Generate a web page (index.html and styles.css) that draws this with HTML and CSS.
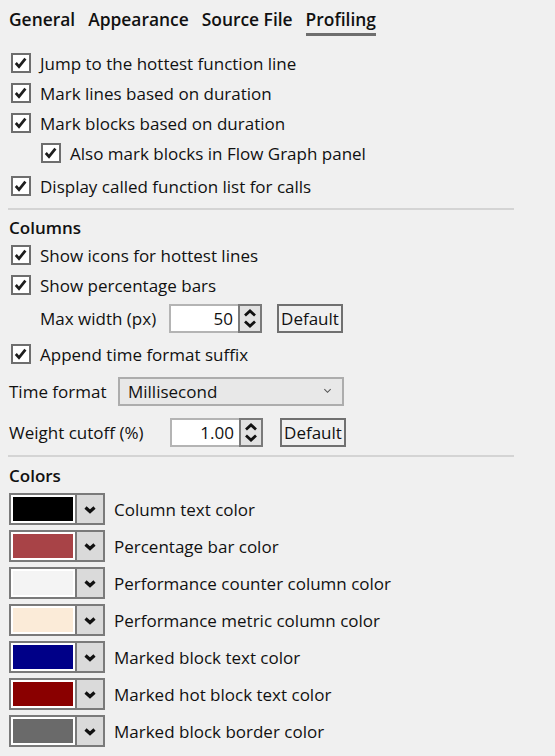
FILE: index.html
```html
<!DOCTYPE html>
<html>
<head>
<meta charset="utf-8">
<link rel="stylesheet" href="styles.css">
</head>
<body>
<div class="tabs">
  <div class="tab">General</div>
  <div class="tab">Appearance</div>
  <div class="tab">Source File</div>
  <div class="tab active">Profiling</div>
</div>

<div class="group first">
  <label class="cb"><span class="box"><svg viewBox="0 0 20 20"><polyline points="3.5,10 7.5,14.5 15.5,4.5"/></svg></span>Jump to the hottest function line</label>
  <label class="cb"><span class="box"><svg viewBox="0 0 20 20"><polyline points="3.5,10 7.5,14.5 15.5,4.5"/></svg></span>Mark lines based on duration</label>
  <label class="cb"><span class="box"><svg viewBox="0 0 20 20"><polyline points="3.5,10 7.5,14.5 15.5,4.5"/></svg></span>Mark blocks based on duration</label>
  <label class="cb sub"><span class="box"><svg viewBox="0 0 20 20"><polyline points="3.5,10 7.5,14.5 15.5,4.5"/></svg></span>Also mark blocks in Flow Graph panel</label>
  <label class="cb gap"><span class="box"><svg viewBox="0 0 20 20"><polyline points="3.5,10 7.5,14.5 15.5,4.5"/></svg></span>Display called function list for calls</label>
</div>

<div class="sep"></div>

<div class="group">
  <div class="head">Columns</div>
  <label class="cb"><span class="box"><svg viewBox="0 0 20 20"><polyline points="3.5,10 7.5,14.5 15.5,4.5"/></svg></span>Show icons for hottest lines</label>
  <label class="cb"><span class="box"><svg viewBox="0 0 20 20"><polyline points="3.5,10 7.5,14.5 15.5,4.5"/></svg></span>Show percentage bars</label>
  <div class="field sub2">
    <span class="flabel w1">Max width (px)</span>
    <div class="spin"><span class="val">50</span><span class="arrows"><svg viewBox="0 0 20 24"><polyline points="5,9 10,4.5 15,9"/><polyline points="5,15 10,19.5 15,15"/></svg></span></div>
    <button class="btn">Default</button>
  </div>
  <label class="cb gap2"><span class="box"><svg viewBox="0 0 20 20"><polyline points="3.5,10 7.5,14.5 15.5,4.5"/></svg></span>Append time format suffix</label>
  <div class="field tf">
    <span class="flabel w2">Time format</span>
    <div class="select"><span>Millisecond</span><svg viewBox="0 0 10 6"><polyline points="1.5,1 5,4.5 8.5,1"/></svg></div>
  </div>
  <div class="field wc">
    <span class="flabel w3">Weight cutoff (%)</span>
    <div class="spin"><span class="val">1.00</span><span class="arrows"><svg viewBox="0 0 20 24"><polyline points="5,9 10,4.5 15,9"/><polyline points="5,15 10,19.5 15,15"/></svg></span></div>
    <button class="btn b2">Default</button>
  </div>
</div>

<div class="sep s2"></div>

<div class="group">
  <div class="head h2">Colors</div>
  <div class="colors">
    <div class="crow"><div class="cbtn"><span class="sw" style="background:#000000"></span><span class="dd"><svg viewBox="0 0 14 9"><polyline points="2.5,2.5 7,6.5 11.5,2.5"/></svg></span></div>Column text color</div>
    <div class="crow"><div class="cbtn"><span class="sw" style="background:#a84347"></span><span class="dd"><svg viewBox="0 0 14 9"><polyline points="2.5,2.5 7,6.5 11.5,2.5"/></svg></span></div>Percentage bar color</div>
    <div class="crow"><div class="cbtn"><span class="sw" style="background:#f4f4f4"></span><span class="dd"><svg viewBox="0 0 14 9"><polyline points="2.5,2.5 7,6.5 11.5,2.5"/></svg></span></div>Performance counter column color</div>
    <div class="crow"><div class="cbtn"><span class="sw" style="background:#fbebd8"></span><span class="dd"><svg viewBox="0 0 14 9"><polyline points="2.5,2.5 7,6.5 11.5,2.5"/></svg></span></div>Performance metric column color</div>
    <div class="crow"><div class="cbtn"><span class="sw" style="background:#000088"></span><span class="dd"><svg viewBox="0 0 14 9"><polyline points="2.5,2.5 7,6.5 11.5,2.5"/></svg></span></div>Marked block text color</div>
    <div class="crow"><div class="cbtn"><span class="sw" style="background:#8a0000"></span><span class="dd"><svg viewBox="0 0 14 9"><polyline points="2.5,2.5 7,6.5 11.5,2.5"/></svg></span></div>Marked hot block text color</div>
    <div class="crow"><div class="cbtn"><span class="sw" style="background:#6a6a6a"></span><span class="dd"><svg viewBox="0 0 14 9"><polyline points="2.5,2.5 7,6.5 11.5,2.5"/></svg></span></div>Marked block border color</div>
  </div>
</div>
</body>
</html>
```

FILE: styles.css
```css
html, body {
  margin: 0;
  padding: 0;
  background: #f0f0f0;
}
body {
  font-family: "Open Sans", "Noto Sans", sans-serif;
  font-size: 17px;
  color: #111;
  width: 555px;
  height: 756px;
  overflow: hidden;
}
.tabs {
  display: flex;
  gap: 13px;
  padding: 5px 0 0 9px;
  height: 44px;
  box-sizing: border-box;
}
.tab {
  font-weight: 600;
  font-size: 17.4px;
  color: #111;
  height: 31px;
  line-height: 28px;
  box-sizing: border-box;
}
.tab.active {
  border-bottom: 3px solid #6e6e6e;
}
.group {
  display: flex;
  flex-direction: column;
  padding-left: 11px;
}
.group.first {
  padding-top: 4px;
}
.cb {
  display: flex;
  align-items: center;
  height: 30px;
  gap: 9px;
}
.cb.sub {
  padding-left: 30px;
}
.cb.gap {
  margin-top: 3px;
}
.cb.gap2 {
  margin-top: 6px;
}
.box {
  width: 20px;
  height: 20px;
  box-sizing: border-box;
  border: 2px solid #6e6e6e;
  background: #fff;
  display: flex;
  align-items: center;
  justify-content: center;
}
.box svg {
  width: 16px;
  height: 16px;
}
.box polyline {
  fill: none;
  stroke: #1e1e1e;
  stroke-width: 3.4;
}
.sep {
  height: 2px;
  background: #d4d4d4;
  margin: 7px 41px 0 8px;
}
.sep.s2 {
  margin-top: 8px;
}
.head {
  font-weight: 600;
  font-size: 17px;
  height: 30px;
  line-height: 36px;
  margin-left: -2px;
  color: #111;
}
.head.h2 {
  line-height: 38px;
  height: 36px;
}
.field {
  display: flex;
  align-items: center;
  height: 30px;
}
.field.sub2 {
  padding-left: 29px;
  margin-top: 3px;
}
.flabel.w1 { width: 129px; }
.flabel.w2 { width: 109px; }
.flabel.w3 { width: 161px; }
.field.tf, .field.wc {
  margin-left: -2px;
}
.field.tf {
  margin-top: 7px;
}
.field.wc {
  margin-top: 11px;
}
.spin {
  width: 93px;
  height: 29px;
  box-sizing: border-box;
  border: 2px solid #b4b4b4;
  background: #fff;
  display: flex;
  align-items: center;
}
.spin .val {
  flex: 1;
  text-align: right;
  padding-right: 5px;
}
.spin .arrows {
  width: 24px;
  height: 29px;
  box-sizing: border-box;
  margin: -2px -2px -2px 0;
  border: 2px solid #7a7a7a;
  background: #e2e2e2;
  display: flex;
}
.spin .arrows svg {
  width: 20px;
  height: 25px;
}
.spin polyline {
  fill: none;
  stroke: #111;
  stroke-width: 2.8;
}
.btn {
  margin-left: 15px;
  height: 29px;
  width: 66px;
  box-sizing: border-box;
  border: 2px solid #707070;
  background: #f0f0f0;
  font-family: inherit;
  font-size: 17px;
  color: #111;
  padding: 0;
}
.btn.b2 {
  margin-left: 17px;
}
.select {
  width: 226px;
  height: 29px;
  box-sizing: border-box;
  border: 2px solid #adadad;
  background: #e8e8e8;
  display: flex;
  align-items: center;
  justify-content: space-between;
  padding: 0 10px 0 8px;
}
.select svg {
  width: 9px;
  height: 6px;
}
.select polyline {
  fill: none;
  stroke: #555;
  stroke-width: 1.2;
}
.colors {
  display: flex;
  flex-direction: column;
  gap: 5px;
  margin-left: -2px;
}
.crow {
  display: flex;
  align-items: center;
  gap: 9px;
  height: 32px;
}
.cbtn {
  width: 96px;
  height: 32px;
  box-sizing: border-box;
  border: 2px solid #7a7a7a;
  background: #fff;
  display: flex;
}
.sw {
  width: 60px;
  margin: 2px;
}
.dd {
  flex: 1;
  border-left: 2px solid #7a7a7a;
  background: #dadada;
  display: flex;
  align-items: center;
  justify-content: center;
}
.dd svg {
  width: 14px;
  height: 9px;
}
.dd polyline {
  fill: none;
  stroke: #111;
  stroke-width: 3.2;
}
```
